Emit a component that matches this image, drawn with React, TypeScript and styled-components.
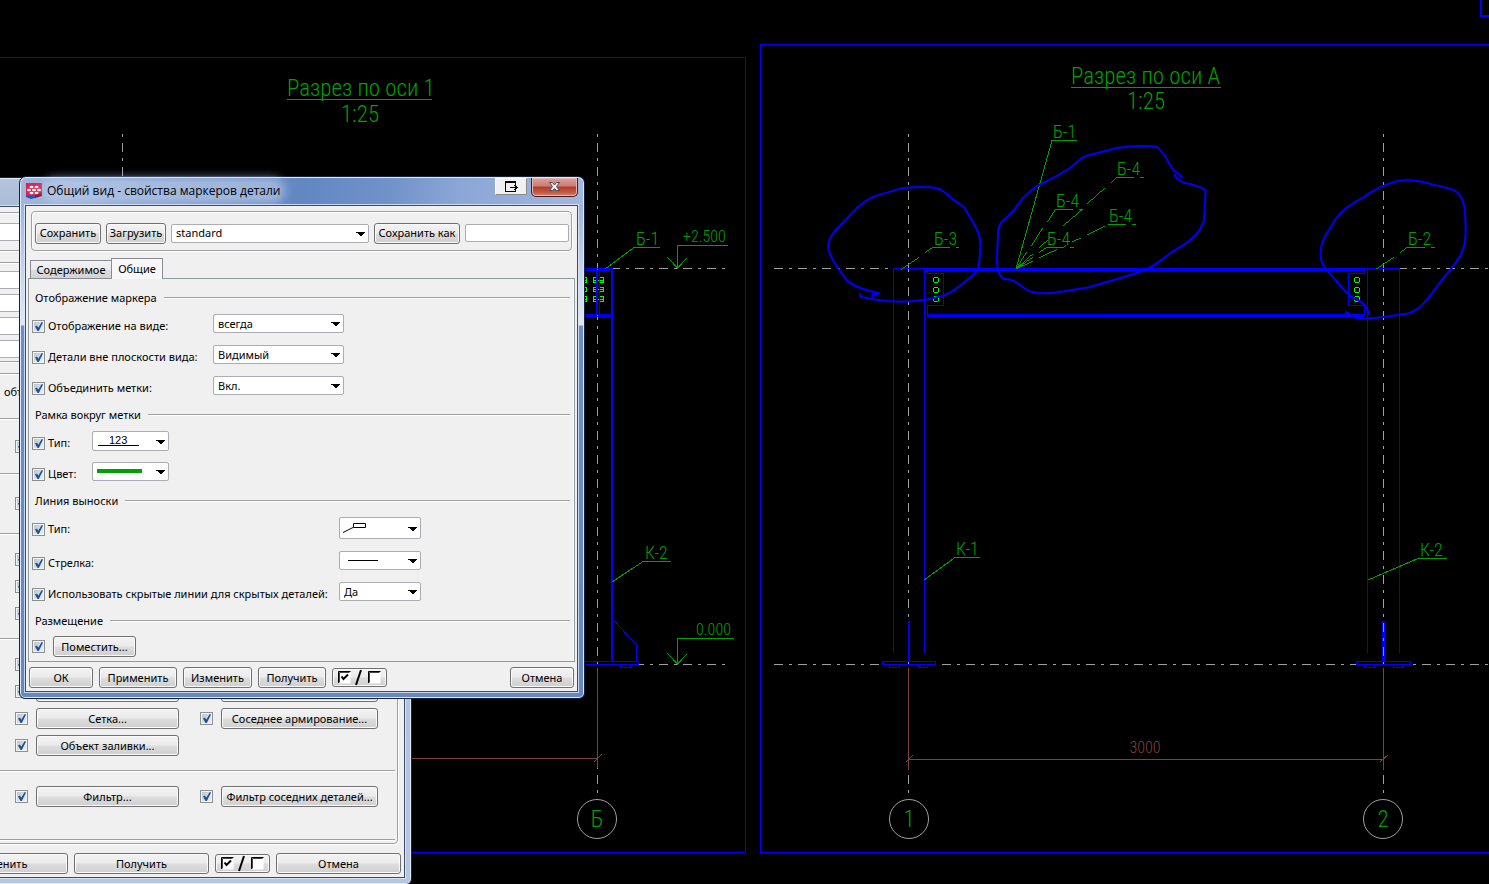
import React from "react";
import styled, { createGlobalStyle, css } from "styled-components";

const uiFont = '"Noto Sans", "Open Sans", sans-serif';
const cadFont = '"Roboto Condensed", "Roboto", sans-serif';

const GlobalStyle = createGlobalStyle`
  *, *::before, *::after { box-sizing: border-box; }
  body { margin: 0; background: #000; font: 11px/16px ${uiFont}; color: #000; }
  button, input, select { font: inherit; color: inherit; margin: 0; }
`;

/* ---------- workspace ---------- */

const Workspace = styled.main`
  position: relative;
  min-height: 100vh;
  overflow: hidden;
  background: #000;
`;

const Sheet = styled.svg`
  position: absolute;
  inset: 0;
  width: 100%;
  height: 100%;
  fill: none;
  shape-rendering: crispEdges;
  text {
    font-family: ${cadFont};
    font-weight: 300;
    fill: #00a000;
    stroke: none;
  }
`;

const AxisLine = styled.path`
  stroke: #a0a0a0;
  stroke-dasharray: 3 6 9 6;
`;
const AxisLineH = styled(AxisLine)`
  stroke-dasharray: 9 6 3 6;
`;
const Steel = styled.path<{ $w?: number }>`
  stroke: #0000ff;
  stroke-width: ${(p) => p.$w ?? 1};
`;
const Bolt = styled.path`
  stroke: #00ff00;
`;
const Note = styled.path`
  stroke: #00a000;
`;
const Dim = styled.path`
  stroke: #804040;
`;
const Pen = styled.path`
  stroke: #0000ff;
  stroke-width: 6;
  stroke-linejoin: round;
  shape-rendering: auto;
`;
const Mark = styled.text`
  font-size: 18px;
`;
const Level = styled.text`
  font-size: 16px;
`;
const Title = styled.text`
  font-size: 23px;
`;
const DimText = styled.text`
  && {
    font-size: 16px;
    fill: #804040;
  }
`;

/* ---------- windows ---------- */

const Window = styled.section<{ $active?: boolean }>`
  position: absolute;
  display: flex;
  flex-direction: column;
  border: 1px solid #16233a;
  border-radius: 7px 7px 6px 6px;
  padding: 0 6px 6px 5px;
  box-shadow: inset 0 0 0 1px #dfeafa;
  background: ${(p) =>
    p.$active
      ? "linear-gradient(#a5bade, #9db5dd 28px, #c4d2ea 90px, #dfe7f5 148px, #6c8fc6 149px, #6488bf)"
      : "linear-gradient(#b4c4dc, #a9bcd7 28px, #b6c6de)"};
`;

const BackWindow = styled(Window)`
  left: -120px;
  top: 177px;
  width: 532px;
`;

const FrontWindow = styled(Window)`
  left: 19px;
  top: 176px;
  width: 566px;
`;

const TitleBar = styled.header<{ $active?: boolean }>`
  display: flex;
  align-items: flex-start;
  height: 27px;
  margin: 1px -5px 0 -4px;
  padding-left: 5px;
  border-radius: 6px 6px 0 0;
  ${(p) =>
    p.$active &&
    css`
      background: linear-gradient(100deg, #a3b8da, #7f9dcd 22%, #6287c1 50%, #7092c9 65%, #8ba7d6 78%, #a2b7dd);
    `}
`;

const Caption = styled.h1`
  flex: 1;
  margin: 4px 0 0 5px;
  font: 12px/18px "Open Sans", ${uiFont};
  span {
    border-radius: 9px;
    background: rgba(196, 212, 238, 0.55);
    box-shadow: 0 0 8px 5px rgba(196, 212, 238, 0.55);
  }
`;

const AppIcon = styled.svg`
  width: 16px;
  height: 16px;
  margin-top: 5px;
`;

const SnapButton = styled.button`
  width: 32px;
  height: 17px;
  padding: 0;
  border: 1px solid;
  border-color: #fff #8a8a8a #8a8a8a #fff;
  background: #f0f0f0;
  svg { display: block; margin: 1px auto 0; }
`;

const CloseButton = styled.button`
  width: 47px;
  height: 19px;
  margin: 0 5px 0 4px;
  padding: 0;
  border: 1px solid #4c1a20;
  border-top: 0;
  border-radius: 0 0 5px 5px;
  box-shadow: inset 0 0 0 1px #e5b5ae;
  background: linear-gradient(#dba39b, #cb7d72 45%, #b43a2b 50%, #c05a45 80%, #d08a74);
  svg { display: block; margin: 0 auto; }
`;

const Client = styled.div`
  display: flex;
  flex-direction: column;
  border: 1px solid #3c4b66;
  background: #f0f0f0;
  box-shadow: 0 0 0 1px rgba(225, 234, 248, 0.8);
`;

/* ---------- controls ---------- */

const Button = styled.button<{ $w?: number }>`
  display: flex;
  align-items: center;
  justify-content: center;
  height: 21px;
  width: ${(p) => (p.$w ? `${p.$w}px` : "auto")};
  flex: none;
  padding: 0;
  white-space: nowrap;
  border: 1px solid #707070;
  border-radius: 3px;
  box-shadow: inset 0 0 0 1px #fafafa;
  background: linear-gradient(#f3f3f3, #ebebeb 48%, #dddddd 52%, #cfcfcf);
`;

const ToggleButton = styled(Button)`
  height: 19px;
`;

const Check = styled.input`
  appearance: none;
  flex: none;
  width: 13px;
  height: 13px;
  border: 1px solid #8e8f8f;
  background: linear-gradient(135deg, #b9c1cb, #f2f4f6);
  box-shadow: inset 0 0 0 1px #f4f4f4;
`;

const CheckBox = styled.span`
  display: grid;
  flex: none;
  > * { grid-area: 1 / 1; }
  svg { pointer-events: none; }
`;

const TextInput = styled.input`
  width: 104px;
  height: 18px;
  border: 1px solid #abadb3;
  border-radius: 2px;
  background: #fff;
`;

const SelectBox = styled.span<{ $w: number; $h?: number }>`
  display: grid;
  flex: none;
  width: ${(p) => p.$w}px;
  height: ${(p) => p.$h ?? 19}px;
  > * { grid-area: 1 / 1; min-width: 0; }
  > svg { pointer-events: none; }
`;

const Select = styled.select<{ $sketch?: boolean }>`
  appearance: none;
  height: 100%;
  padding: 0 20px 0 4px;
  border: 1px solid #abadb3;
  border-radius: 2px;
  background: #fff;
  ${(p) =>
    p.$sketch &&
    css`
      padding: 0 16px 2px;
      font-family: "Liberation Sans", sans-serif;
    `}
`;

const Arrow = styled.svg`
  justify-self: end;
  align-self: center;
  margin: 2px 4px 0 0;
`;

const ProfileBar = styled.div`
  display: flex;
  align-items: center;
  height: 40px;
  margin: 5px 5px 0 5px;
  padding: 4px 2px 0 3px;
  gap: 5px;
  border: 1px solid #a0a0a0;
  border-radius: 4px;
  box-shadow: inset 1px 1px #fff, 1px 1px #fff;
`;

const Tabs = styled.div`
  display: flex;
  align-items: flex-end;
  height: 21px;
  margin: 7px 4px -1px;
`;

const Tab = styled.button<{ $on?: boolean }>`
  position: relative;
  width: ${(p) => (p.$on ? 52 : 81)}px;
  height: ${(p) => (p.$on ? 21 : 19)}px;
  padding: 0;
  white-space: nowrap;
  border: 1px solid #898c95;
  border-bottom: ${(p) => (p.$on ? "0" : "1px solid #898c95")};
  border-right-width: ${(p) => (p.$on ? 1 : 0)}px;
  background: ${(p) => (p.$on ? "#f8f8f8" : "linear-gradient(#f2f2f2, #ebebeb 50%, #dcdcdc 55%, #d2d2d2)")};
`;

const Panel = styled.div`
  height: 384px;
  margin: 0 2px;
  padding: 11px 3px 0;
  border: 1px solid #919b9c;
  box-shadow: inset -1px 0 #fff;
`;

const Legend = styled.h2`
  display: flex;
  align-items: center;
  gap: 7px;
  margin: 0 1px 0 3px;
  font: 11px/16px ${uiFont};
  &::after {
    content: "";
    flex: 1;
    height: 2px;
    border-top: 1px solid #a0a0a0;
    border-bottom: 1px solid #fff;
  }
`;

const Fields = styled.div`
  display: flex;
  flex-direction: column;
  gap: 12px;
  padding: 8px 0 12px;
`;

const Field = styled.div<{ $label: number; $h?: number }>`
  display: grid;
  grid-template-columns: ${(p) => p.$label}px auto;
  justify-content: start;
  align-items: start;
  height: ${(p) => p.$h ?? 19}px;
`;

const FieldLabel = styled.label`
  display: flex;
  align-items: center;
  gap: 3px;
  height: 16px;
  margin-top: 4px;
  white-space: nowrap;
`;

const Placing = styled.div`
  display: flex;
  align-items: center;
  gap: 8px;
  padding-top: 7px;
`;

const Actions = styled.footer<{ $back?: boolean }>`
  display: flex;
  align-items: center;
  gap: 6px;
  padding: ${(p) => (p.$back ? "9px 4px 3px 47px" : "5px 3px 3px 3px")};
  > :last-child { margin-left: auto; }
`;

/* ---------- rear window parts ---------- */

const Group = styled.div<{ $top: number }>`
  display: flex;
  flex-direction: column;
  gap: 5px;
  margin: ${(p) => p.$top}px 6px 0 5px;
  padding: 0 2px;
  border: 1px solid #a0a0a0;
  border-radius: 4px;
  box-shadow: inset 1px 1px #fff, 1px 1px #fff;
`;

const NameGroup = styled(Group)`
  padding-block: 10px 9px;
`;

const AttributeGroup = styled(Group)`
  padding-block: 8px 3px;
`;

const OptionGroup = styled(Group)`
  gap: 0;
  padding-bottom: 2px;
`;

const WideInput = styled(TextInput)`
  width: 200px;
`;

const Rule = styled.hr`
  width: 100%;
  height: 2px;
  margin: 0;
  border: 0;
  border-top: 1px solid #a0a0a0;
  border-bottom: 1px solid #fff;
`;

const Options = styled.div<{ $top: number; $bottom: number }>`
  display: flex;
  flex-direction: column;
  gap: 6px;
  padding: ${(p) => p.$top}px 0 ${(p) => p.$bottom}px 120px;
`;

const OptionRow = styled.div`
  display: grid;
  grid-template-columns: 21px 164px 21px 157px;
  align-items: center;
  height: 21px;
  > :nth-child(2) { width: 143px; }
  > :nth-child(4) { width: 157px; }
`;

const OptionText = styled.p`
  margin: 0;
  padding: 10px 0 18px 109px;
`;

/* ---------- components ---------- */

function Checked({ label }: { label?: string }) {
  return (
    <CheckBox>
      <Check type="checkbox" defaultChecked aria-label={label} />
      <svg width="13" height="13" viewBox="0 0 13 13">
        <path d="M3 6.400 5 5.600 6.200 7.800 9.800 2 11 2.600 6.800 11 5.600 11Z" fill="#1c4f94" />
      </svg>
    </CheckBox>
  );
}

function Combo(props: {
  label: string;
  value: string;
  w: number;
  h?: number;
  sketch?: boolean;
  children?: React.ReactNode;
}) {
  const { label, value, w, h, sketch, children } = props;
  return (
    <SelectBox $w={w} $h={h}>
      <Select aria-label={label} $sketch={sketch}>
        <option>{value}</option>
      </Select>
      {children}
      <Arrow width="9" height="5" viewBox="0 0 9 5" shapeRendering="crispEdges">
        <path d="M0 0H9V1H8L5 4H4L1 1H0Z" />
      </Arrow>
    </SelectBox>
  );
}

function Toggle() {
  return (
    <ToggleButton type="button" $w={55} aria-label="Флажки">
      <svg width="43" height="17" viewBox="0 0 43 17" fill="none">
        <path d="M1 3H12.500V14.500H1ZM31 3H42.500V14.500H31Z" fill="#fff" />
        <path d="M.5 14V2.500H12.500M30.500 14V2.500H42.500" stroke="#000" />
        <path d="M1.500 13.500V3.500H11.500M31.500 13.500V3.500H41.500" stroke="#444" />
        <path d="M3.500 7.500 5.500 10 10 5.500" stroke="#000" strokeWidth="2" />
        <path d="M18 16 23 1" stroke="#000" strokeWidth="2" />
      </svg>
    </ToggleButton>
  );
}

function AxisBubble({ x, label }: { x: number; label: string }) {
  return (
    <g>
      <circle cx={x} cy="819" r="19.500" stroke="#a0a0a0" shapeRendering="auto" />
      <Title x={x} y="827" textAnchor="middle">{label}</Title>
    </g>
  );
}

const octagon = (x: number, y: number) => `M${x - 1.5} ${y - 2}h3l1 1v3l-1 1h-3l-1-1v-3z`;

function Drawing() {
  return (
    <Sheet aria-label="Чертёж">
      {/* view frames */}
      <Steel d="M0 57.500H745.500V852.500H0" />
      <Steel d="M1489 44.500H760.500V852.500H1489" />
      <Steel $w={2} d="M1489 16H1481V0" />

      {/* axes */}
      <AxisLine d="M122.500 134V200" />
      <AxisLine d="M597.500 134V668M597.500 766V799" />
      <AxisLine d="M908.500 134V668M908.500 766V799" />
      <AxisLine d="M1383.500 134V668M1383.500 766V799" />
      <AxisLineH d="M611 268.500H725M611 664.500H725" />
      <AxisLineH d="M774 268.500H1489M774 664.500H1489" />

      {/* section along axis 1 */}
      <Bolt d="M580 277.500h6v5h-6m0-2h6M593.500 277.500h4v5h-4zm6 0h4v5h-4zM593 280.500h10M580 287.500h6v4h-6M593.500 287.500h4v4h-4zm6 0h4v4h-4zM593 289.500h10M580 296.500h6v5h-6m0-2h6M593.500 296.500h4v5h-4zm6 0h4v5h-4zM593 299.500h10" />
      <Steel d="M584 268.500H612M584 270.500H610M599.500 270V314M584 314.500H612M584 316.500H611" />
      <Steel $w={2} d="M597 270V314M612 268V662" />
      <Steel d="M613 621.500H615L636.500 645V661M584 661.500H638.500V664.500H584M620.500 664V667.500H630.500V664" />
      <Note d="M660 247.500H634L605 269M728 245.500H677.500V268M667 257 677.500 268 687 258" />
      <Note d="M671 561.500H643L612 582M734 638.500H677.500V664M667 653 677.500 664 687 654" />
      <Dim d="M597.500 668V768M411 758.500H597M594 762 602 754" />
      <Title x="287" y="96">Разрез по оси 1</Title>
      <Note d="M287 99.500H432" />
      <Title x="360" y="122" textAnchor="middle">1:25</Title>
      <Mark x="636" y="245">Б-1</Mark>
      <Level x="683" y="242">+2.500</Level>
      <Mark x="645" y="559">К-2</Mark>
      <Level x="696" y="635">0.000</Level>
      <AxisBubble x={597} label="Б" />

      {/* section along axis A */}
      <Steel d="M893.500 653V268.500H1399.500V653M927 270.500H1364M1367.500 268V653" />
      <Steel d="M927 314.500H1364M927 316.500H1364M927.500 268V273.500H943.500V305.500H927.500V316M925.500 305V316M927 270 925 273" />
      <Steel d="M924.500 268V653" />
      <Steel d="M1364.500 268V273.500H1348.500V305.500H1364.500V316" />
      <Bolt d={[279.5, 289.5, 298.5].map((y) => octagon(936, y) + octagon(1357, y)).join("")} />
      <Steel d="M882.500 661.500H935.500V664.500H882.500ZM889.500 664V667.500H899.500V664M918.500 664V667.500H927.500V664" />
      <Steel $w={2} d="M909 621V661" />
      <Steel d="M1356.500 661.500H1410.500V664.500H1356.500ZM1364.500 664V667.500H1374.500V664M1393.500 664V667.500H1402.500V664M1382.500 661V621.500H1384.500V661" />
      <Dim d="M908.500 668V770M1383.500 668V770M908 759.500H1384M906 762 913 755M1380 762 1388 755" />
      <Note d="M980 557.500H955L924 580M1447 558.500H1418L1368 580M1077 140.500H1052L1016 269" />
      <Title x="1071" y="84">Разрез по оси А</Title>
      <Note d="M1071 87.500H1221" />
      <Title x="1146" y="109" textAnchor="middle">1:25</Title>
      <Mark x="1053" y="138">Б-1</Mark>
      <Mark x="1117" y="175">Б-4</Mark>
      <Mark x="1056" y="207">Б-4</Mark>
      <Mark x="1109" y="222">Б-4</Mark>
      <Mark x="1047" y="245">Б-4</Mark>
      <Mark x="934" y="245">Б-3</Mark>
      <Mark x="1408" y="245">Б-2</Mark>
      <Mark x="956" y="555">К-1</Mark>
      <Mark x="1420" y="556">К-2</Mark>
      <DimText x="1145" y="753" textAnchor="middle">3000</DimText>
      <AxisBubble x={909} label="1" />
      <AxisBubble x={1383} label="2" />

      {/* hidden-line leaders and hand-drawn outlines, drafted at triple scale */}
      <g transform="translate(820 50) scale(.33333)">
        <Note
          strokeWidth="3"
          d="M942 382.500H889L874 397M960 382.500H971M855 414 802 461M785 480 730 527M683 571 657 593M638 612 588 657
             M759 478.500H706L683 515M777 478.500H788M668 535 634 587M620 606 588 657
             M865 523.500H917M936 523.500H947M855 528 802 554M782 565 757 575M711 598 657 624M638 634 588 657
             M732 592.500H680L657 608M750 592.500H761M732 592 737 586M638 622 588 657
             M389 592.500H337L315 608M408 592.500H416M297 622 244 658"
        />
        <Pen d="M155 741 158 735 178 730C130 720 100 710 80 690C45 645 25 610 25 592C22 570 35 550 62 525L110 475C125 462 140 450 160 440L240 416C270 410 330 410 350 415C370 420 385 435 398 448C410 456 422 462 433 473L460 518C475 545 482 560 481 590C480 620 478 640 475 655C465 675 430 700 400 722C380 735 350 745 310 750C260 757 210 757 160 748L122 740 119 730" />
        <Pen d="M1088 384 1075 370 1062 363C1045 340 1035 310 1012 292C990 285 930 288 890 294L800 317C780 325 770 340 745 357C710 382 660 400 635 420C620 435 610 442 600 455C585 480 570 495 545 515C535 530 534 540 534 560C532 600 528 640 534 660C540 680 545 685 555 687C575 687 580 692 590 698C610 712 620 722 640 727C690 735 720 725 800 713C860 697 920 680 975 660C1010 645 1035 620 1060 603C1090 585 1105 580 1138 542L1152 513 1157 421C1145 410 1120 403 1090 398C1075 390 1065 385 1064 372" />
      </g>
      <g transform="translate(1220 0) scale(.33333)">
        <Note strokeWidth="3" d="M614 742.500H561L540 758M633 742.500H644M521 772 468 808" />
        <Pen d="M449 945C440 920 430 905 412 900C395 893 385 885 370 867C350 843 318 812 306 788C298 760 300 740 312 715L345 660C370 625 390 615 430 592C470 562 500 550 537 542C570 538 600 542 640 554C690 565 710 568 722 590C735 610 735 630 737 680C737 730 733 740 722 765C700 805 670 830 640 875C610 915 590 935 560 941C500 950 450 960 410 955L376 935" />
      </g>
    </Sheet>
  );
}

function Option({ left, right }: { left?: string; right?: string }) {
  return (
    <OptionRow>
      <Checked label={left || "Параметр"} />
      {left !== undefined && <Button type="button" aria-label={left || "Параметр"}>{left}</Button>}
      {right !== undefined && <Checked label={right || "Параметр"} />}
      {right !== undefined && <Button type="button" aria-label={right || "Параметр"}>{right}</Button>}
    </OptionRow>
  );
}

function ViewProperties() {
  return (
    <BackWindow aria-label="Свойства вида">
      <TitleBar />
      <Client>
        <NameGroup $top={5}>
          <WideInput aria-label="Имя" />
        </NameGroup>
        <AttributeGroup $top={11}>
          <WideInput aria-label="Атрибут 1" />
          <WideInput aria-label="Атрибут 2" />
          <WideInput aria-label="Атрибут 3" />
          <WideInput aria-label="Атрибут 4" />
        </AttributeGroup>
        <OptionGroup $top={11}>
          <OptionText>объекты</OptionText>
          <Rule />
          <Options $top={16} $bottom={16}><Option /></Options>
          <Rule />
          <Options $top={18} $bottom={19}><Option /></Options>
          <Rule />
          <Options $top={14} $bottom={14}><Option /><Option /><Option /></Options>
          <Rule />
          <Options $top={14} $bottom={14}>
            <Option />
            <Option left="" right="" />
            <Option left="Сетка..." right="Соседнее армирование..." />
            <Option left="Объект заливки..." />
          </Options>
          <Rule />
          <Options $top={14} $bottom={32}>
            <Option left="Фильтр..." right="Фильтр соседних деталей..." />
          </Options>
          <Rule />
        </OptionGroup>
        <Actions $back>
          <Button type="button" $w={134}>Изменить</Button>
          <Button type="button" $w={135}>Получить</Button>
          <Toggle />
          <Button type="button" $w={125}>Отмена</Button>
        </Actions>
      </Client>
    </BackWindow>
  );
}

function MarkProperties() {
  return (
    <FrontWindow $active aria-labelledby="dlg">
      <TitleBar $active>
        <AppIcon viewBox="0 0 16 16" aria-hidden="true">
          <path d="M0 0H16V12L9 13H0Z" fill="#e0234f" />
          <path d="M0 12 9 13V15L5 16 0 14Z" fill="#1f55b5" />
          <path d="M9 12 16 9V13L9 15Z" fill="#8a1038" />
          <g fill="#fff">
            <ellipse cx="5.500" cy="4" rx="2" ry="1.200" />
            <ellipse cx="10.500" cy="4" rx="2" ry="1.200" />
            <ellipse cx="3" cy="7" rx="2" ry="1.200" />
            <ellipse cx="8" cy="7" rx="2" ry="1.200" />
            <ellipse cx="13" cy="7" rx="2" ry="1.200" />
            <ellipse cx="5.500" cy="10" rx="2" ry="1.200" />
            <ellipse cx="10.500" cy="10" rx="2" ry="1.200" />
          </g>
        </AppIcon>
        <Caption id="dlg"><span>Общий вид - свойства маркеров детали</span></Caption>
        <SnapButton type="button" aria-label="Свернуть в панель">
          <svg width="13" height="12" viewBox="0 0 13 12" fill="none" stroke="#000" shapeRendering="crispEdges">
            <path d="M10.500 5V1.500H.5V10.500H10.500V8" />
            <path d="M0 1H11" strokeWidth="2" />
            <path d="M5 6.500H12M9.500 4 12 6.500 9.500 9" />
          </svg>
        </SnapButton>
        <CloseButton type="button" aria-label="Закрыть">
          <svg width="13" height="12" viewBox="0 0 13 12">
            <path d="M1.500 1.500H4.500L6.500 4 8.500 1.500H11.500L8.500 5.500 11.500 9.500H8.500L6.500 7.500 4.500 9.500H1.500L4.500 5.500Z" fill="#f0f0f0" stroke="#4a4a5c" />
          </svg>
        </CloseButton>
      </TitleBar>
      <Client>
        <ProfileBar>
          <Button type="button" $w={66}>Сохранить</Button>
          <Button type="button" $w={60}>Загрузить</Button>
          <Combo label="Профиль" value="standard" w={198} />
          <Button type="button" $w={86}>Сохранить как</Button>
          <TextInput aria-label="Имя профиля" />
        </ProfileBar>
        <Tabs>
          <Tab type="button">Содержимое</Tab>
          <Tab type="button" $on>Общие</Tab>
        </Tabs>
        <Panel>
          <Legend>Отображение маркера</Legend>
          <Fields>
            <Field $label={181}>
              <FieldLabel><Checked />Отображение на виде:</FieldLabel>
              <Combo label="Отображение на виде" value="всегда" w={131} />
            </Field>
            <Field $label={181}>
              <FieldLabel><Checked />Детали вне плоскости вида:</FieldLabel>
              <Combo label="Детали вне плоскости вида" value="Видимый" w={131} />
            </Field>
            <Field $label={181}>
              <FieldLabel><Checked />Объединить метки:</FieldLabel>
              <Combo label="Объединить метки" value="Вкл." w={131} />
            </Field>
          </Fields>
          <Legend>Рамка вокруг метки</Legend>
          <Fields>
            <Field $label={60}>
              <FieldLabel><Checked />Тип:</FieldLabel>
              <Combo label="Тип рамки" value="123" w={77} sketch>
                <svg width="60" height="19"><path d="M6 14.500H47" stroke="#000" /></svg>
              </Combo>
            </Field>
            <Field $label={60}>
              <FieldLabel><Checked />Цвет:</FieldLabel>
              <Combo label="Цвет рамки" value="" w={77}>
                <svg width="60" height="19"><path d="M5 9H50" stroke="#00a000" strokeWidth="4" /></svg>
              </Combo>
            </Field>
          </Fields>
          <Legend>Линия выноски</Legend>
          <Fields>
            <Field $label={307} $h={22}>
              <FieldLabel><Checked />Тип:</FieldLabel>
              <Combo label="Тип линии" value="" w={82} h={22}>
                <svg width="60" height="22" fill="none" stroke="#000">
                  <path d="M4 15.500 14 10.500M14.500 6.500H26.500V10.500H14.500Z" />
                </svg>
              </Combo>
            </Field>
            <Field $label={307}>
              <FieldLabel><Checked />Стрелка:</FieldLabel>
              <Combo label="Стрелка" value="" w={82}>
                <svg width="60" height="19"><path d="M9 9.500H39" stroke="#000" /></svg>
              </Combo>
            </Field>
            <Field $label={307}>
              <FieldLabel><Checked />Использовать скрытые линии для скрытых деталей:</FieldLabel>
              <Combo label="Использовать скрытые линии" value="Да" w={82} />
            </Field>
          </Fields>
          <Legend>Размещение</Legend>
          <Placing>
            <Checked label="Размещение" />
            <Button type="button" $w={83}>Поместить...</Button>
          </Placing>
        </Panel>
        <Actions>
          <Button type="button" $w={64}>ОК</Button>
          <Button type="button" $w={78}>Применить</Button>
          <Button type="button" $w={69}>Изменить</Button>
          <Button type="button" $w={68}>Получить</Button>
          <Toggle />
          <Button type="button" $w={64}>Отмена</Button>
        </Actions>
      </Client>
    </FrontWindow>
  );
}

export default function App() {
  return (
    <Workspace>
      <GlobalStyle />
      <Drawing />
      <ViewProperties />
      <MarkProperties />
    </Workspace>
  );
}
